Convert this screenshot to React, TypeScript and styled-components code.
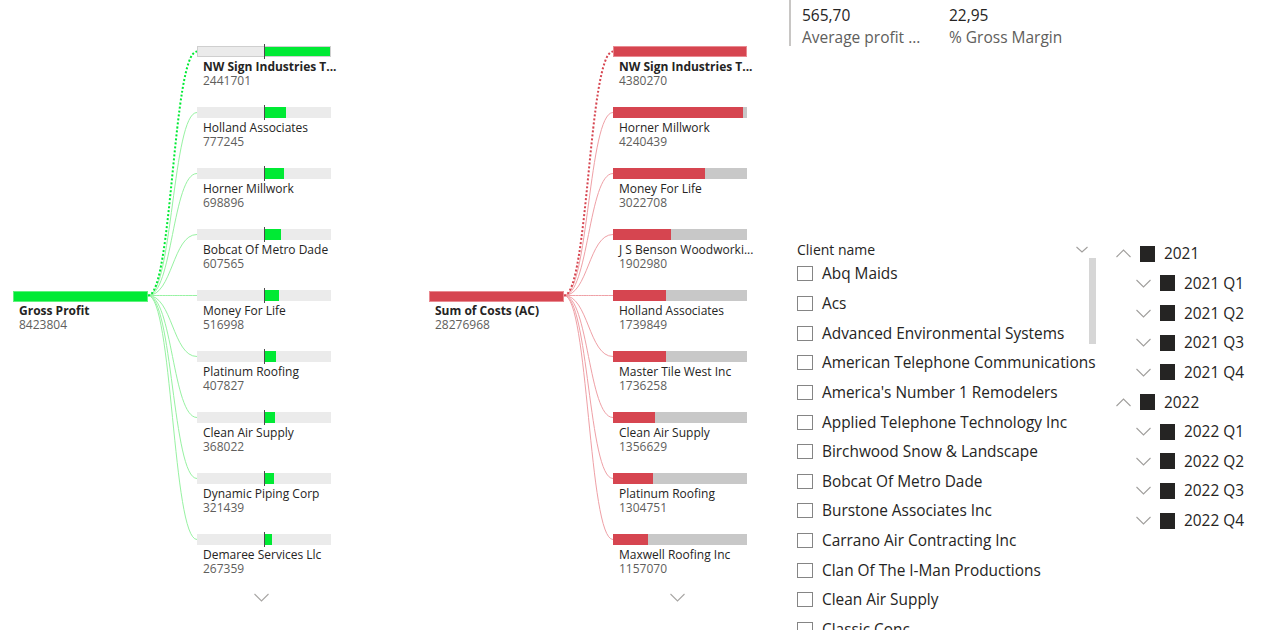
import React from "react";
import styled, { createGlobalStyle } from "styled-components";

const GlobalStyle = createGlobalStyle`
  html, body { margin: 0; padding: 0; background: #ffffff; }
  body { font-family: "Segoe UI", "Open Sans", "Noto Sans", sans-serif; color: #252423; }
  * { box-sizing: border-box; }
`;

const FONT = `"Segoe UI", "Open Sans", "Noto Sans", sans-serif`;

type Theme = {
  fill: string;
  fillBorder: string;
  track: string;
  link: string;
  mode: "center" | "left";
};

const GREEN: Theme = {
  fill: "#00ea34",
  fillBorder: "#5ff27d",
  track: "#ebebeb",
  link: "#97f2a2",
  mode: "center",
};

const RED: Theme = {
  fill: "#d64550",
  fillBorder: "#e98a91",
  track: "#c8c8c8",
  link: "#efa0a6",
  mode: "left",
};

type Item = { name: string; value: number };

const greenRoot = { name: "Gross Profit", value: 8423804 };
const greenItems: Item[] = [
  { name: "NW Sign Industries T...", value: 2441701 },
  { name: "Holland Associates", value: 777245 },
  { name: "Horner Millwork", value: 698896 },
  { name: "Bobcat Of Metro Dade", value: 607565 },
  { name: "Money For Life", value: 516998 },
  { name: "Platinum Roofing", value: 407827 },
  { name: "Clean Air Supply", value: 368022 },
  { name: "Dynamic Piping Corp", value: 321439 },
  { name: "Demaree Services Llc", value: 267359 },
];

const redRoot = { name: "Sum of Costs (AC)", value: 28276968 };
const redItems: Item[] = [
  { name: "NW Sign Industries T...", value: 4380270 },
  { name: "Horner Millwork", value: 4240439 },
  { name: "Money For Life", value: 3022708 },
  { name: "J S Benson Woodworki...", value: 1902980 },
  { name: "Holland Associates", value: 1739849 },
  { name: "Master Tile West Inc", value: 1736258 },
  { name: "Clean Air Supply", value: 1356629 },
  { name: "Platinum Roofing", value: 1304751 },
  { name: "Maxwell Roofing Inc", value: 1157070 },
];

const clients = [
  "Abq Maids",
  "Acs",
  "Advanced Environmental Systems",
  "American Telephone Communications",
  "America's Number 1 Remodelers",
  "Applied Telephone Technology Inc",
  "Birchwood Snow & Landscape",
  "Bobcat Of Metro Dade",
  "Burstone Associates Inc",
  "Carrano Air Contracting Inc",
  "Clan Of The I-Man Productions",
  "Clean Air Supply",
  "Classic Conc",
];

const years = [
  { year: "2021", quarters: ["2021 Q1", "2021 Q2", "2021 Q3", "2021 Q4"] },
  { year: "2022", quarters: ["2022 Q1", "2022 Q2", "2022 Q3", "2022 Q4"] },
];

/* ---------- page ---------- */

const Page = styled.div`
  display: flex;
  width: 1283px;
  height: 630px;
  overflow: hidden;
  font-family: ${FONT};
`;

/* ---------- decomposition tree ---------- */

const TreeVisual = styled.div<{ $width: number }>`
  width: ${(p) => p.$width}px;
  flex: none;
  display: flex;
  flex-direction: column;
  padding: 46px 0 0 13px;
`;

const TreeBody = styled.div`
  display: flex;
  align-items: center;
`;

const RootNode = styled.div`
  width: 135px;
  flex: none;
`;

const ChildColumn = styled.div`
  width: 134px;
  flex: none;
  display: flex;
  flex-direction: column;
  gap: 19px;
`;

const Node = styled.div`
  display: flex;
  flex-direction: column;
`;

const Bar = styled.div<{ $track: string; $border?: string }>`
  height: 11px;
  display: flex;
  align-items: center;
  background: ${(p) => p.$track};
  border: ${(p) => (p.$border ? `1px solid ${p.$border}` : "none")};
`;

const Spacer = styled.div<{ $w: number }>`
  width: ${(p) => p.$w}px;
  flex: none;
  align-self: stretch;
`;

const Marker = styled.div`
  width: 1px;
  height: 15px;
  flex: none;
  background: #4b4b4b;
`;

const Fill = styled.div<{ $color: string }>`
  flex: none;
  align-self: stretch;
  background: ${(p) => p.$color};
`;

const RootBar = styled.div<{ $color: string; $border: string }>`
  height: 11px;
  background: ${(p) => p.$color};
  border: 1px solid ${(p) => p.$border};
`;

const Label = styled.div<{ $gap: number }>`
  padding: ${(p) => p.$gap}px 0 0 6px;
  font-size: 12px;
  line-height: 14px;
`;

const Name = styled.div<{ $bold?: boolean }>`
  color: #252423;
  font-weight: ${(p) => (p.$bold ? 700 : 400)};
  white-space: nowrap;
`;

const Value = styled.div`
  color: #605e5c;
`;

const MoreRow = styled.div<{ $shift: number }>`
  margin: 17px 0 0 ${(p) => 184 + p.$shift}px;
  width: 134px;
  display: flex;
  justify-content: center;
`;

const Chevron = ({ up = false, w = 15, h = 9, color = "#a8a6a4" }: { up?: boolean; w?: number; h?: number; color?: string }) => (
  <svg width={w} height={h} viewBox={`0 0 ${w} ${h}`} style={{ display: "block", flex: "none" }}>
    <polyline
      points={up ? `0.5,${h - 1} ${w / 2},1 ${w - 0.5},${h - 1}` : `0.5,1 ${w / 2},${h - 1} ${w - 0.5},1`}
      fill="none"
      stroke={color}
      strokeWidth={1.1}
    />
  </svg>
);

const Links = ({ theme, count }: { theme: Theme; count: number }) => {
  const x0 = 0;
  const x1 = 49;
  const y0 = 249.5;
  const mx = (x0 + x1) / 2;
  return (
    <svg width={49} height={530} viewBox="0 0 49 530" style={{ display: "block", flex: "none", overflow: "visible" }}>
      {Array.from({ length: count })
        .map((_, i) => i)
        .reverse()
        .map((i) => {
          const y1 = 61 * i + 5.5;
          const d = `M ${x0} ${y0} C ${mx} ${y0}, ${mx} ${y1}, ${x1} ${y1}`;
          return i === 0 ? (
            <path key={i} d={d} fill="none" stroke={theme.fill} strokeWidth={2} strokeDasharray="2 2" />
          ) : (
            <path key={i} d={d} fill="none" stroke={theme.link} strokeWidth={1} />
          );
        })}
    </svg>
  );
};

const ChildBar = ({ theme, value, max, selected }: { theme: Theme; value: number; max: number; selected: boolean }) => {
  if (theme.mode === "center") {
    const w = Math.round((value / max) * 65.5);
    return (
      <Bar $track={theme.track} $border={selected ? "#cfcfcf" : undefined}>
        <Spacer $w={selected ? 66 : 67} />
        <Marker />
        <Fill $color={theme.fill} style={{ width: selected ? w - 1 : w }} />
      </Bar>
    );
  }
  const w = Math.round((value / max) * 134);
  return (
    <Bar $track={theme.track} $border={selected ? theme.fillBorder : undefined}>
      <Fill $color={theme.fill} style={{ width: selected ? w - 2 : w }} />
    </Bar>
  );
};

const Tree = ({
  theme,
  root,
  items,
  width,
  shift,
}: {
  theme: Theme;
  root: Item;
  items: Item[];
  width: number;
  shift: number;
}) => {
  const max = Math.max(...items.map((i) => i.value));
  return (
    <TreeVisual $width={width}>
      <TreeBody>
        <RootNode>
          <RootBar $color={theme.fill} $border={theme.fillBorder} />
          <Label $gap={2}>
            <Name $bold>{root.name}</Name>
            <Value>{root.value}</Value>
          </Label>
        </RootNode>
        <Links theme={theme} count={items.length} />
        <ChildColumn>
          {items.map((it, i) => (
            <Node key={it.name}>
              <ChildBar theme={theme} value={it.value} max={max} selected={i === 0} />
              <Label $gap={3}>
                <Name $bold={i === 0}>{it.name}</Name>
                <Value>{it.value}</Value>
              </Label>
            </Node>
          ))}
        </ChildColumn>
      </TreeBody>
      <MoreRow $shift={shift}>
        <Chevron />
      </MoreRow>
    </TreeVisual>
  );
};

/* ---------- right panel ---------- */

const RightPanel = styled.div`
  flex: 1;
  display: flex;
  flex-direction: column;
`;

const KpiRow = styled.div`
  height: 46px;
  display: flex;
  border-left: 2px solid #c8c6c4;
  padding: 4px 0 0 11px;
`;

const KpiCard = styled.div`
  width: 147px;
  display: flex;
  flex-direction: column;
  font-size: 15.5px;
  line-height: 22px;
`;

const KpiValue = styled.div`
  color: #252423;
`;

const KpiLabel = styled.div`
  color: #605e5c;
  white-space: nowrap;
`;

const SlicerRow = styled.div`
  margin-top: 193px;
  display: flex;
`;

const ClientSlicer = styled.div`
  margin-left: 8px;
  width: 300px;
  flex: none;
  display: flex;
  flex-direction: column;
`;

const SlicerHeader = styled.div`
  height: 20px;
  display: flex;
  align-items: center;
  justify-content: space-between;
  padding-right: 9px;
  font-size: 14px;
  color: #252423;
`;

const ListArea = styled.div`
  position: relative;
  display: flex;
  flex-direction: column;
`;

const ScrollThumb = styled.div`
  position: absolute;
  right: 1px;
  top: -1px;
  width: 7px;
  height: 86px;
  background: #d6d6d6;
`;

const ListRow = styled.div`
  height: 29.65px;
  display: flex;
  align-items: center;
  gap: 9px;
  font-size: 15.4px;
  color: #252423;
  white-space: nowrap;
`;

const CheckBox = styled.span`
  width: 16px;
  height: 15px;
  flex: none;
  border: 1px solid #858585;
  background: #ffffff;
`;

const DateSlicer = styled.div`
  margin-left: 18px;
  display: flex;
  flex-direction: column;
`;

const DateRow = styled.div<{ $indent: number }>`
  height: 29.65px;
  display: flex;
  align-items: center;
  padding-left: ${(p) => p.$indent}px;
  font-size: 15.4px;
  color: #252423;
  white-space: nowrap;
`;

const Toggle = styled.span`
  width: 16px;
  display: flex;
  justify-content: center;
  margin-right: 9px;
`;

const Square = styled.span`
  width: 15px;
  height: 16px;
  flex: none;
  background: #252423;
  margin-right: 9px;
`;

export default function App() {
  return (
    <>
      <GlobalStyle />
      <Page>
        <Tree theme={GREEN} root={greenRoot} items={greenItems} width={416} shift={-3} />
        <Tree theme={RED} root={redRoot} items={redItems} width={373} shift={-3} />
        <RightPanel>
          <KpiRow>
            <KpiCard>
              <KpiValue>565,70</KpiValue>
              <KpiLabel>Average profit ...</KpiLabel>
            </KpiCard>
            <KpiCard>
              <KpiValue>22,95</KpiValue>
              <KpiLabel>% Gross Margin</KpiLabel>
            </KpiCard>
          </KpiRow>
          <SlicerRow>
            <ClientSlicer>
              <SlicerHeader>
                <span>Client name</span>
                <Chevron w={12} h={7} color="#a19f9d" />
              </SlicerHeader>
              <ListArea>
                <ScrollThumb />
                {clients.map((c) => (
                  <ListRow key={c}>
                    <CheckBox />
                    <span>{c}</span>
                  </ListRow>
                ))}
              </ListArea>
            </ClientSlicer>
            <DateSlicer>
              {years.map((y) => (
                <React.Fragment key={y.year}>
                  <DateRow $indent={0}>
                    <Toggle>
                      <Chevron up w={15} h={9} color="#a19f9d" />
                    </Toggle>
                    <Square />
                    <span>{y.year}</span>
                  </DateRow>
                  {y.quarters.map((q) => (
                    <DateRow key={q} $indent={20}>
                      <Toggle>
                        <Chevron w={15} h={9} color="#a19f9d" />
                      </Toggle>
                      <Square />
                      <span>{q}</span>
                    </DateRow>
                  ))}
                </React.Fragment>
              ))}
            </DateSlicer>
          </SlicerRow>
        </RightPanel>
      </Page>
    </>
  );
}
